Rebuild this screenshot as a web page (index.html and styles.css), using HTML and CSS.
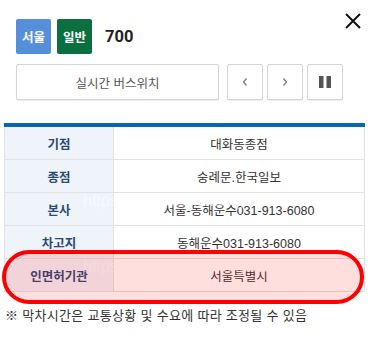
FILE: index.html
```html
<!DOCTYPE html>
<html lang="ko">
<head>
<meta charset="utf-8">
<link rel="stylesheet" href="styles.css">
</head>
<body>
<div class="page">
  <div class="top">
    <span class="badge blue">서울</span>
    <span class="badge green">일반</span>
    <span class="route">700</span>
    <span class="close"><svg width="16" height="16" viewBox="0 0 16 16"><path d="M1 1 L15 15 M15 1 L1 15" stroke="#111" stroke-width="2" fill="none"/></svg></span>
  </div>
  <div class="controls">
    <button class="btn wide">실시간 버스위치</button>
    <button class="btn sq"><svg width="8" height="10" viewBox="0 0 8 10"><path d="M5.5 1.5 L2.5 5 L5.5 8.5" stroke="#7a7a8a" stroke-width="1.3" fill="none"/></svg></button>
    <button class="btn sq"><svg width="8" height="10" viewBox="0 0 8 10"><path d="M2.5 1.5 L5.5 5 L2.5 8.5" stroke="#7a7a8a" stroke-width="1.3" fill="none"/></svg></button>
    <button class="btn sq"><svg width="12" height="12" viewBox="0 0 12 12"><rect x="0" y="0" width="4.5" height="12" fill="#555"/><rect x="7.5" y="0" width="4.5" height="12" fill="#555"/></svg></button>
  </div>
  <table class="info">
    <tr><th>기점</th><td>대화동종점</td></tr>
    <tr><th>종점</th><td>숭례문.한국일보</td></tr>
    <tr><th>본사</th><td>서울-동해운수031-913-6080</td></tr>
    <tr><th>차고지</th><td>동해운수031-913-6080</td></tr>
    <tr><th>인면허기관</th><td>서울특별시</td></tr>
  </table>
  <p class="note">※ 막차시간은 교통상황 및 수요에 따라 조정될 수 있음</p>
  <div class="wm wm1">https://es.radiantstarlight.com/</div>
  <div class="wm wm2">https://es.radiantstarlight.com/</div>
  <div class="highlight"></div>
</div>
</body>
</html>
```

FILE: styles.css
```css
html, body {
  margin: 0;
  padding: 0;
  background: #fff;
}
body {
  font-family: "Liberation Sans", "Noto Sans CJK KR", sans-serif;
  color: #333;
}
.page {
  position: relative;
  width: 372px;
  height: 346px;
  overflow: hidden;
}
.top {
  display: flex;
  align-items: center;
  padding: 19px 0 0 16px;
  height: 35px;
  position: relative;
}
.badge {
  display: flex;
  align-items: center;
  justify-content: center;
  width: 35px;
  height: 35px;
  border-radius: 2px;
  color: #fff;
  font-family: "Noto Sans CJK KR", sans-serif;
  font-weight: 700;
  font-size: 12.5px;
  margin-right: 6px;
}
.badge.blue { background: #568fd9; }
.badge.green { background: #0b6f3f; }
.route {
  margin-left: 7px;
  font-size: 16.5px;
  font-weight: 700;
  color: #222;
  font-family: Roboto, "Liberation Sans", sans-serif;
}
.close {
  position: absolute;
  left: 345px;
  top: 13px;
  width: 16px;
  height: 16px;
}
.controls {
  display: flex;
  margin: 10px 0 0 16px;
  height: 36px;
}
.btn {
  height: 36px;
  background: #fff;
  border: 1px solid #d4d4d4;
  border-radius: 2px;
  box-shadow: 0 1px 1px rgba(0,0,0,0.08);
  display: flex;
  align-items: center;
  justify-content: center;
  padding: 0;
  font-family: "Noto Sans CJK KR", sans-serif;
  font-size: 12.5px;
  color: #555;
}
.btn.wide {
  width: 203px;
  margin-right: 8px;
}
.btn.sq {
  width: 36px;
  margin-right: 4px;
}
.info {
  margin: 23px 0 0 4px;
  width: 361px;
  border-collapse: collapse;
  border-top: 4px solid #0467b6;
  font-family: "Liberation Sans", "Noto Sans CJK KR", sans-serif;
  font-size: 12.5px;
}
.info th, .info td {
  height: 32px;
  padding: 0;
  border: 1px solid #e2e2e2;
  text-align: center;
}
.info tr:first-child th, .info tr:first-child td { border-top: none; }
.info th {
  width: 108px;
  background: #eef4fa;
  color: #2b4a78;
  font-weight: 700;
  font-family: "Noto Sans CJK KR", sans-serif;
}
.info td {
  color: #333;
  background: #fff;
}
.note {
  margin: 13px 0 0 5px;
  font-family: "Noto Sans CJK KR", sans-serif;
  font-size: 13px;
  letter-spacing: 0.3px;
  color: #333;
}
.wm {
  position: absolute;
  color: rgba(255,255,255,0.55);
  font-family: "Liberation Sans", sans-serif;
  font-size: 16px;
  white-space: nowrap;
}
.wm1 { left: 83px; top: 192px; }
.wm2 { left: 83px; top: 258px; }
.highlight {
  position: absolute;
  left: 2px;
  top: 250px;
  width: 354px;
  height: 46px;
  border: 4px solid #f00;
  border-radius: 27px;
  background: rgba(255, 0, 0, 0.13);
}
```
